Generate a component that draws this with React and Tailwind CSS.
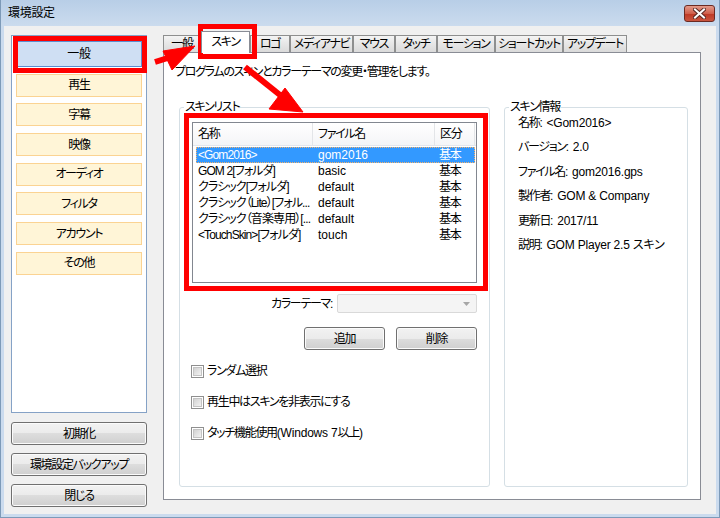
import React from "react";

const tabs = [
  { label: "一般", w: "w-[38px]" },
  { label: "スキン", w: "w-[49px]", active: true },
  { label: "ロゴ", w: "w-[40px]" },
  { label: "メディアナビ", w: "w-[63px]" },
  { label: "マウス", w: "w-[42px]" },
  { label: "タッチ", w: "w-[42px]" },
  { label: "モーション", w: "w-[58px]" },
  { label: "ショートカット", w: "w-[68px]" },
  { label: "アップデート", w: "w-[64px]" },
];

const navItems = ["再生", "字幕", "映像", "オーディオ", "フィルタ", "アカウント", "その他"];

const skins = [
  ["<Gom2016>", "gom2016", "基本"],
  ["GOM 2[フォルダ]", "basic", "基本"],
  ["クラシック[フォルダ]", "default", "基本"],
  ["クラシック（Lite）[フォル...", "default", "基本"],
  ["クラシック（音楽専用）[...", "default", "基本"],
  ["<TouchSkin>[フォルダ]", "touch", "基本"],
];

const info = [
  ["名称", "<Gom2016>"],
  ["バージョン", "2.0"],
  ["ファイル名", "gom2016.gps"],
  ["製作者", "GOM & Company"],
  ["更新日", "2017/11"],
  ["説明", "GOM Player 2.5 スキン"],
];

const btn =
  "flex items-center justify-center whitespace-nowrap rounded-[3px] border border-[#707070] bg-[linear-gradient(#f2f2f2,#ebebeb_50%,#dddddd_50%,#cfcfcf)] shadow-[inset_0_0_0_1px_#fbfbfb]";

const WinButton = ({ className, children }) => (
  <div className={`${btn} ${className}`}>{children}</div>
);

const Checkbox = ({ children }) => (
  <div className="flex h-[16px] items-center">
    <div className="flex h-[13px] w-[13px] items-center justify-center border border-[#8f8f8f] bg-white">
      <div className="h-[9px] w-[9px] border border-[#c4c4c4] bg-[linear-gradient(135deg,#d2d2d2,#f2f2f2)]" />
    </div>
    <span className="ml-[3px] whitespace-nowrap leading-[16px]">{children}</span>
  </div>
);

const Annotations = () => (
  <svg
    className="pointer-events-none absolute left-0 top-0"
    width="720"
    height="518"
    viewBox="0 0 720 518"
  >
    <g fill="none" stroke="#ff0000" strokeWidth="5">
      <rect x="14.5" y="38.5" width="129" height="32" />
      <rect x="199.5" y="26.5" width="54" height="30" />
      <rect x="185.5" y="115.5" width="299" height="173" />
    </g>
    <g fill="#ff0000" stroke="#ff0000">
      <line x1="154" y1="62" x2="170" y2="57" strokeWidth="6" />
      <polygon points="162,51 171,70 194,46" strokeWidth="1" />
      <line x1="244" y1="67" x2="279" y2="95" strokeWidth="6" />
      <polygon points="284,88 268,109 302,112" strokeWidth="1" />
    </g>
  </svg>
);

export default function App() {
  return (
    <div className="relative flex h-[518px] w-[720px] flex-col overflow-hidden border border-t-0 border-[#7d9ab8] bg-[#cbdbee] font-['Liberation_Sans','Noto_Sans_CJK_JP',sans-serif] text-[12px] tracking-[-1.3px] text-black [font-feature-settings:'palt']">
      {/* title bar */}
      <div className="flex h-[26px] shrink-0 items-start justify-between bg-[linear-gradient(#b8cee7,#cbdbee)] pl-[7px] pr-[4px]">
        <span className="pt-[5px] leading-[16px] tracking-[-0.3px]">環境設定</span>
        <div className="mt-[5px] flex h-[17px] w-[31px] items-center justify-center rounded-[3px] border border-[#6b2a22] bg-[linear-gradient(#e39a8a,#d0604c_50%,#bf3a26_55%,#c9553f)]">
          <svg width="13" height="11" viewBox="0 0 13 11">
            <path d="M2 1.5 L11 9.5 M11 1.5 L2 9.5" stroke="#5a2a25" strokeWidth="4" strokeLinecap="square" />
            <path d="M2 1.5 L11 9.5 M11 1.5 L2 9.5" stroke="#ffffff" strokeWidth="2" strokeLinecap="square" />
          </svg>
        </div>
      </div>

      {/* client area */}
      <div className="mx-[3px] mb-[3px] flex flex-1 bg-[#f0f0f0] pl-[7px]">
        {/* left column */}
        <div className="flex w-[136px] flex-col pt-[9px]">
          <div className="flex h-[378px] flex-col gap-[6.7px] border border-[#85a2c6] bg-white px-[4px] pt-[5px]">
            <div className="flex h-[26px] items-center justify-center border border-[#5b8dd0] bg-[#cfdff3] tracking-[-0.3px]">
              一般
            </div>
            {navItems.map((n) => (
              <div
                key={n}
                className="flex h-[23px] items-center justify-center border border-[#fbd392] bg-[#fff5d7]"
              >
                {n}
              </div>
            ))}
          </div>
          <div className="mt-[9px] flex flex-col gap-[8px]">
            <WinButton className="h-[23px]">初期化</WinButton>
            <WinButton className="h-[23px]">環境設定バックアップ</WinButton>
            <WinButton className="h-[23px]">閉じる</WinButton>
          </div>
        </div>

        {/* tab control */}
        <div className="ml-[16px] flex w-[538px] flex-col pt-[5px]">
          <div className="flex h-[21px] items-end">
            {tabs.map((t) =>
              t.active ? (
                <div
                  key={t.label}
                  className={`relative z-10 -mb-px flex h-[22px] items-center justify-center whitespace-nowrap border border-b-0 border-[#898c95] bg-white pb-[2px] ${t.w}`}
                >
                  {t.label}
                </div>
              ) : (
                <div
                  key={t.label}
                  className={`flex h-[17px] items-center justify-center whitespace-nowrap border border-b-0 border-[#8e8f8f] bg-[linear-gradient(#f4f4f4,#e6e6e6_50%,#dadada)] ${t.w}`}
                >
                  {t.label}
                </div>
              )
            )}
          </div>
          <div className="h-[448px] border border-[#898c95] bg-white pt-[12px]">
            <div className="pl-[11px] leading-[15px]">
              プログラムのスキンとカラーテーマの変更・管理をします。
            </div>
            <div className="mt-[20px] flex gap-[14px] pl-[15px]">
              {/* skin list group */}
              <fieldset className="h-[387px] w-[311px] rounded-[3px] border border-[#d5dfe5]">
                <legend className="ml-[4px] px-[1px] leading-[15px]">スキンリスト</legend>
                <div className="flex flex-col px-[12px]">
                  <div className="mt-[7px] h-[161px] w-[285px] border border-[#828790] bg-white">
                    <div className="flex h-[23px] border-b border-[#e3e6ea] bg-[linear-gradient(#ffffff,#f4f5f7)]">
                      <div className="flex w-[120px] items-center border-r border-[#e3e5e8] pl-[5px]">名称</div>
                      <div className="flex w-[122px] items-center border-r border-[#e3e5e8] pl-[5px]">ファイル名</div>
                      <div className="flex w-[40px] items-center border-r border-[#e3e5e8] pl-[5px]">区分</div>
                    </div>
                    <div className="mt-[1px] flex flex-col pl-[3px]">
                      {skins.map(([name, file, kind], i) => (
                        <div
                          key={name}
                          className={`flex h-[16px] w-[279px] items-center leading-[14px] ${
                            i === 0
                              ? "border border-dotted border-[#f6b26b] bg-[#3399ff] text-white"
                              : "border border-transparent"
                          }`}
                        >
                          <div className="w-[115px] overflow-hidden whitespace-nowrap pl-[1px] tracking-[-0.9px]">
                            {name}
                          </div>
                          <div className="w-[122px] pl-[6px] tracking-normal">{file}</div>
                          <div className="pl-[5px]">{kind}</div>
                        </div>
                      ))}
                    </div>
                  </div>

                  <div className="mt-[11px] flex items-center justify-end">
                    <span className="mr-[5px]">カラーテーマ:</span>
                    <div className="flex h-[19px] w-[140px] items-center justify-end rounded-[2px] border border-[#d9d9d9] bg-[#f4f4f4] pr-[6px]">
                      <svg width="7" height="4" viewBox="0 0 7 4">
                        <path d="M0 0 H7 L3.5 4 Z" fill="#a6a6a6" />
                      </svg>
                    </div>
                  </div>

                  <div className="mt-[14px] flex justify-end gap-[11px]">
                    <WinButton className="h-[23px] w-[81px]">追加</WinButton>
                    <WinButton className="h-[23px] w-[81px]">削除</WinButton>
                  </div>

                  <div className="-ml-[1px] mt-[13px] flex flex-col gap-[15px]">
                    <Checkbox>ランダム選択</Checkbox>
                    <Checkbox>再生中はスキンを非表示にする</Checkbox>
                    <Checkbox>
                      タッチ機能使用<span className="tracking-[-0.2px]">(Windows 7</span>以上)
                    </Checkbox>
                  </div>
                </div>
              </fieldset>

              {/* skin info group */}
              <fieldset className="h-[387px] w-[184px] rounded-[3px] border border-[#d5dfe5]">
                <legend className="ml-[4px] px-[1px] leading-[15px]">スキン情報</legend>
                <div className="flex flex-col gap-[8.4px] pl-[13px]">
                  {info.map(([k, v]) => (
                    <div key={k} className="flex h-[16px] whitespace-nowrap leading-[16px]">
                      <span>{k}:</span>
                      <span className="ml-[5px] tracking-[-0.2px]">{v}</span>
                    </div>
                  ))}
                </div>
              </fieldset>
            </div>
          </div>
        </div>
      </div>

      <Annotations />
    </div>
  );
}
